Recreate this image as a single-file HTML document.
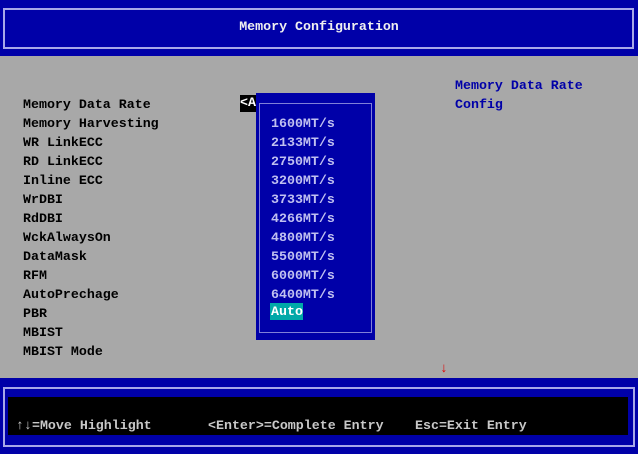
<!DOCTYPE html><html><head><style>
body{margin:0;width:638px;height:454px;background:#a8a8a8;position:relative;overflow:hidden;font-family:"Liberation Mono",monospace;font-weight:bold;font-size:13.3px;}
.a{position:absolute;white-space:pre;line-height:16px;}
</style></head><body>
<div class="a" style="left:0;top:0;width:638px;height:56px;background:#0000a8"></div>
<div class="a" style="left:3px;top:8px;width:627px;height:37px;border:2px solid #a8a8e8"></div>
<div class="a" style="left:0;top:19px;width:638px;text-align:center;color:#f0f0f0">Memory Configuration</div>
<div class="a" style="left:455px;top:76px;color:#0000a8;line-height:19px">Memory Data Rate
Config</div>
<div class="a" style="left:23px;top:95px;color:#000;line-height:19px">Memory Data Rate
Memory Harvesting
WR LinkECC
RD LinkECC
Inline ECC
WrDBI
RdDBI
WckAlwaysOn
DataMask
RFM
AutoPrechage
PBR
MBIST
MBIST Mode</div>
<div class="a" style="left:240px;top:95px;color:#000;line-height:19px"><A
<A
<A
<A
<A
<A
<A
<A
<A
<A
<A
<A
<A
<Auto></div>
<div class="a" style="left:240px;top:95px;width:16px;height:17px;background:#000"></div>
<div class="a" style="left:240px;top:95px;color:#fff">&lt;A</div>
<div class="a" style="left:256px;top:93px;width:119px;height:247px;background:#0000a8"></div>
<div class="a" style="left:259px;top:103px;width:111px;height:228px;border:1px solid #8080d8"></div>
<div class="a" style="left:271px;top:114px;color:#c0c0f0;line-height:19px">1600MT/s
2133MT/s
2750MT/s
3200MT/s
3733MT/s
4266MT/s
4800MT/s
5500MT/s
6000MT/s
6400MT/s</div>
<div class="a" style="left:270px;top:303px;width:33px;height:17px;background:#00a8a8"></div>
<div class="a" style="left:271px;top:304px;color:#fff">Auto</div>
<div class="a" style="left:440px;top:361px;color:#e00000">↓</div>
<div class="a" style="left:0;top:378px;width:638px;height:76px;background:#0000a8"></div>
<div class="a" style="left:3px;top:387px;width:628px;height:56px;border:2px solid #a8a8e8"></div>
<div class="a" style="left:8px;top:397px;width:620px;height:38px;background:#000"></div>
<div class="a" style="left:16px;top:418px;color:#c8c8c8">↑↓=Move Highlight</div>
<div class="a" style="left:208px;top:418px;color:#c8c8c8">&lt;Enter&gt;=Complete Entry</div>
<div class="a" style="left:415px;top:418px;color:#c8c8c8">Esc=Exit Entry</div>
</body></html>
